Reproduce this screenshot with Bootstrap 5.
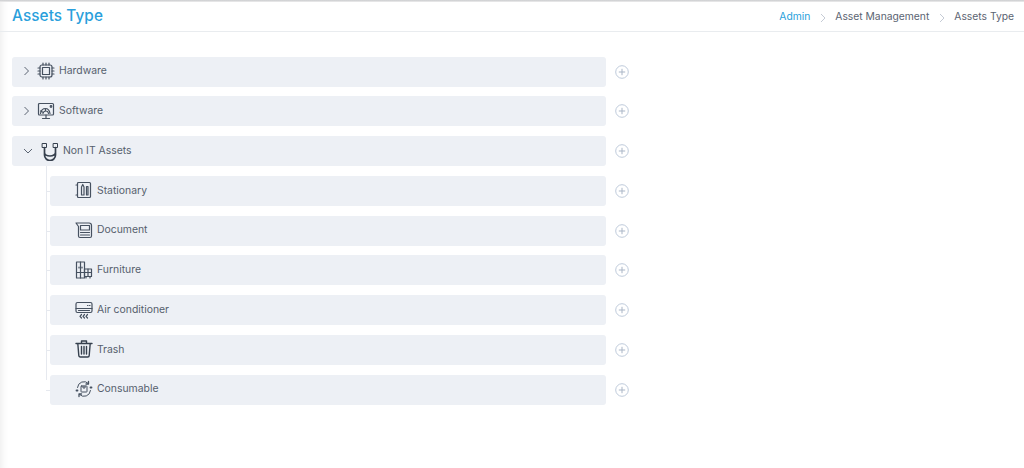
<!DOCTYPE html>
<html lang="en">
<head>
    <meta charset="UTF-8">
    <title>Assets Type</title>
    <link href="https://cdn.jsdelivr.net/npm/bootstrap@5.3.0/dist/css/bootstrap.min.css" rel="stylesheet">
    <style>
        body {
            font-family: Inter, "Liberation Sans", sans-serif;
            color: #565f6d;
            background: #fff;
            height: 468px;
            overflow: hidden;
            box-shadow: inset 9px 0 8px -8px #e9e9e9;
        }
        .top-edge {
            height: 2px;
            background: linear-gradient(#c9cbcd, #eeeeee);
        }
        .page-head {
            height: 30px;
            padding: 0 10px 0 12px;
            border-bottom: 1px solid #e9ecef;
        }
        .page-title {
            font-size: 15.3px;
            font-weight: 500;
            color: #2a9fdc;
            margin: 0;
            letter-spacing: .1px;
        }
        .crumbs {
            font-size: 10.3px;
            color: #5b6472;
            gap: 8.5px;
        }
        .crumbs .crumb-link { color: #2a9fdc; }
        .crumbs svg { width: 8px; height: 10px; margin-top: 2px; }
        .asset-tree {
            padding: 24.7px 0 0 12px;
            width: 639px;
        }
        .tree-row {
            height: 30px;
            margin-bottom: 9.75px;
        }
        .tree-bar {
            flex: 1;
            height: 30px;
            background: #edf0f5;
            border-radius: 3px;
            font-size: 10.4px;
            padding-bottom: 1px;
        }
        .tree-toggle { width: 25px; padding-left: 10px; }
        .tree-toggle svg { width: 9px; height: 10px; display: block; }
        .tree-toggle .open-arrow { width: 12px; }
        .stroke-ico { fill: none; stroke: #465160; stroke-width: 1.2; stroke-linecap: round; stroke-linejoin: round; }
        .tree-icon { width: 18px; height: 18px; flex: none; margin-right: 4px; }
        .cable-ico { margin: 3px 4px 0 4px; stroke-width: 1.7; stroke: #36404e; }
        .bin-ico { stroke-width: 1.4; stroke: #36404e; }
        .thin-ico { stroke-width: 1; }
        .add-btn { width: 14px; height: 14px; margin: 0 10.5px 0 8.5px; flex: none; }
        .tree-kids {
            margin-left: 34px;
            position: relative;
        }
        .tree-kids::before {
            content: "";
            position: absolute;
            left: 0;
            top: -10px;
            bottom: 25px;
            border-left: 1px solid #e6e9ef;
        }
        .tree-kids .tree-row { position: relative; padding-left: 4px; }
        .tree-kids .tree-row::before {
            content: "";
            position: absolute;
            left: 0;
            top: 15px;
            width: 4px;
            border-top: 1px solid #e6e9ef;
        }
        .tree-kids .tree-bar { padding-left: 25px; }
    </style>
</head>
<body>
    <div class="top-edge"></div>
    <div class="page-head d-flex align-items-center justify-content-between">
        <h1 class="page-title">Assets Type</h1>
        <div class="crumbs d-flex align-items-center">
            <span class="crumb-link">Admin</span>
            <svg viewBox="0 0 8 10"><path d="M2 1l4 4-4 4" fill="none" stroke="#c5cbd5"/></svg>
            <span>Asset Management</span>
            <svg viewBox="0 0 8 10"><path d="M2 1l4 4-4 4" fill="none" stroke="#c5cbd5"/></svg>
            <span>Assets Type</span>
        </div>
    </div>

    <div class="asset-tree">
        <div class="tree-row d-flex align-items-center">
            <div class="tree-bar d-flex align-items-center">
                <span class="tree-toggle"><svg viewBox="0 0 9 10"><path d="M2.5 1l4 4-4 4" fill="none" stroke="#5b6472"/></svg></span>
                <svg class="tree-icon stroke-ico" viewBox="0 0 18 18">
                    <rect x="3" y="3" width="12" height="12" rx="2"/><rect x="5.500" y="5.500" width="7" height="7"/>
                    <path d="M6 1v2M9 1v2M12 1v2M6 15v2M9 15v2M12 15v2M1 6h2M1 9h2M1 12h2M15 6h2M15 9h2M15 12h2"/>
                </svg>
                <span>Hardware</span>
            </div>
            <svg class="add-btn" viewBox="0 0 14 14"><circle cx="7" cy="7" r="6.3" fill="none" stroke="#bfcbdb"/><path d="M7 3.8v6.4M3.8 7h6.4" stroke="#a9b5c6"/></svg>
        </div>

        <div class="tree-row d-flex align-items-center">
            <div class="tree-bar d-flex align-items-center">
                <span class="tree-toggle"><svg viewBox="0 0 9 10"><path d="M2.5 1l4 4-4 4" fill="none" stroke="#5b6472"/></svg></span>
                <svg class="tree-icon stroke-ico" viewBox="0 0 18 18">
                    <rect x="1.500" y="1.500" width="15" height="11.500" rx="1"/><path d="M9 13v3M5.500 16.500h7M3.500 11.500c.5-3 2.500-5 5-5s4 2 4.500 5M6 11.500c.3-1.500 1.500-2.500 3-2.500s2.200 1 2.500 2.500M3.500 9l2 1M8.500 6.500v2"/>
                    <circle cx="14" cy="4.500" r=".8"/>
                </svg>
                <span>Software</span>
            </div>
            <svg class="add-btn" viewBox="0 0 14 14"><circle cx="7" cy="7" r="6.3" fill="none" stroke="#bfcbdb"/><path d="M7 3.8v6.4M3.8 7h6.4" stroke="#a9b5c6"/></svg>
        </div>

        <div class="tree-row d-flex align-items-center">
            <div class="tree-bar d-flex align-items-center">
                <span class="tree-toggle"><svg class="open-arrow" viewBox="0 0 9 10"><path d="M.5 3l4 4 4-4" fill="none" stroke="#5b6472"/></svg></span>
                <svg class="tree-icon stroke-ico cable-ico" viewBox="0 0 18 18">
                    <path d="M3.500 4.500V12a5.500 5.500 0 0 0 11 0V4.500M3.500 9.500a5.500 3.500 0 0 0 11 0"/>
                    <rect x="1.500" y=".5" width="4" height="4" stroke-width="1"/><rect x="12.500" y=".5" width="4" height="4" stroke-width="1"/>
                </svg>
                <span>Non IT Assets</span>
            </div>
            <svg class="add-btn" viewBox="0 0 14 14"><circle cx="7" cy="7" r="6.3" fill="none" stroke="#bfcbdb"/><path d="M7 3.8v6.4M3.8 7h6.4" stroke="#a9b5c6"/></svg>
        </div>

        <div class="tree-kids">
            <div class="tree-row d-flex align-items-center">
                <div class="tree-bar d-flex align-items-center">
                    <svg class="tree-icon stroke-ico" viewBox="0 0 18 18">
                        <rect x="2.500" y="1.500" width="13" height="15" rx="1"/><path d="M1 4h1.500M1 14h1.500M6.500 6l1.250-2.500L9 6v8H6.500zM11.500 5.500h1.500v8.500h-1.500z"/>
                    </svg>
                    <span>Stationary</span>
                </div>
                <svg class="add-btn" viewBox="0 0 14 14"><circle cx="7" cy="7" r="6.3" fill="none" stroke="#bfcbdb"/><path d="M7 3.8v6.4M3.8 7h6.4" stroke="#a9b5c6"/></svg>
            </div>
            <div class="tree-row d-flex align-items-center">
                <div class="tree-bar d-flex align-items-center">
                    <svg class="tree-icon stroke-ico" viewBox="0 0 18 18">
                        <path d="M1 2h13a2.500 2.500 0 0 1 2.500 2.500V15a1.500 1.500 0 0 1-1.500 1.500H5A1.500 1.500 0 0 1 3.500 15V5.500L1 2z"/><rect x="5.500" y="4.500" width="9" height="4.500"/><path d="M5.500 11.500h9M5.500 14h9"/>
                    </svg>
                    <span>Document</span>
                </div>
                <svg class="add-btn" viewBox="0 0 14 14"><circle cx="7" cy="7" r="6.3" fill="none" stroke="#bfcbdb"/><path d="M7 3.8v6.4M3.8 7h6.4" stroke="#a9b5c6"/></svg>
            </div>
            <div class="tree-row d-flex align-items-center">
                <div class="tree-bar d-flex align-items-center">
                    <svg class="tree-icon stroke-ico" viewBox="0 0 18 18">
                        <rect x="1.500" y="1" width="8" height="16"/><path d="M5.500 1v16M1.500 11.500h8M4 6v1M7 6v1"/>
                        <rect x="9.500" y="8" width="7" height="7.500"/><path d="M13 8v7.500M9.500 11.500h7M11 15.500V17M15 15.500V17"/>
                    </svg>
                    <span>Furniture</span>
                </div>
                <svg class="add-btn" viewBox="0 0 14 14"><circle cx="7" cy="7" r="6.3" fill="none" stroke="#bfcbdb"/><path d="M7 3.8v6.4M3.8 7h6.4" stroke="#a9b5c6"/></svg>
            </div>
            <div class="tree-row d-flex align-items-center">
                <div class="tree-bar d-flex align-items-center">
                    <svg class="tree-icon stroke-ico" viewBox="0 0 18 18">
                        <rect x="1" y="1.500" width="16" height="10" rx="1.500"/><path d="M1 7.500h16M3.500 9.500h11M12.500 4.500h.5M14.500 4.500h.5"/>
                        <path d="M6.500 13.500l-1.500 1.800 1.500 1.700M9.500 13.500L8 15.300l1.500 1.700M12.500 13.500L11 15.300l1.500 1.700"/>
                    </svg>
                    <span>Air conditioner</span>
                </div>
                <svg class="add-btn" viewBox="0 0 14 14"><circle cx="7" cy="7" r="6.3" fill="none" stroke="#bfcbdb"/><path d="M7 3.8v6.4M3.8 7h6.4" stroke="#a9b5c6"/></svg>
            </div>
            <div class="tree-row d-flex align-items-center">
                <div class="tree-bar d-flex align-items-center">
                    <svg class="tree-icon stroke-ico bin-ico" viewBox="0 0 18 18">
                        <path d="M1 3.500h16M6.500 3.500V1h5v2.500M2.800 3.500l1 12a1.500 1.500 0 0 0 1.500 1.500h7.400a1.500 1.500 0 0 0 1.500-1.500l1-12M6.500 6.500v7.500M9 6.500v7.500M11.500 6.500v7.500"/>
                    </svg>
                    <span>Trash</span>
                </div>
                <svg class="add-btn" viewBox="0 0 14 14"><circle cx="7" cy="7" r="6.3" fill="none" stroke="#bfcbdb"/><path d="M7 3.8v6.4M3.8 7h6.4" stroke="#a9b5c6"/></svg>
            </div>
            <div class="tree-row d-flex align-items-center">
                <div class="tree-bar d-flex align-items-center">
                    <svg class="tree-icon stroke-ico thin-ico" viewBox="0 0 18 18">
                        <path d="M2.500 7.500a6.500 6.500 0 0 1 11-4M15.500 10.500a6.500 6.500 0 0 1-11 4"/><path d="M13.500 1.500v2.500H11M6.500 14H4v2.500" stroke-width="1.300"/>
                        <path d="M15.500 7.500h1M1.500 10.500h1" stroke-width="1.800"/>
                        <rect x="6" y="6" width="6" height="6" rx=".5"/><path d="M8 6v2h2V6"/>
                    </svg>
                    <span>Consumable</span>
                </div>
                <svg class="add-btn" viewBox="0 0 14 14"><circle cx="7" cy="7" r="6.3" fill="none" stroke="#bfcbdb"/><path d="M7 3.8v6.4M3.8 7h6.4" stroke="#a9b5c6"/></svg>
            </div>
        </div>
    </div>

    <script src="https://cdn.jsdelivr.net/npm/bootstrap@5.3.0/dist/js/bootstrap.bundle.min.js"></script>
</body>
</html>
